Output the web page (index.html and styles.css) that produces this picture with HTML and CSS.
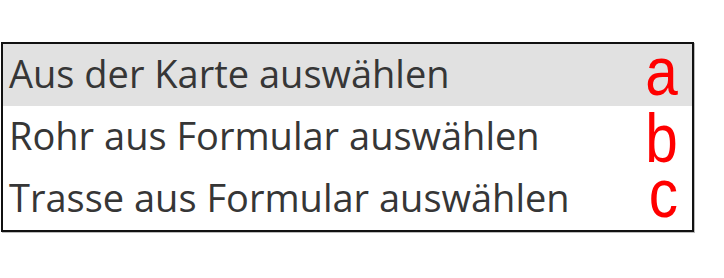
FILE: index.html
```html
<!DOCTYPE html>
<html lang="de">
<head>
<meta charset="utf-8">
<title>Auswahl</title>
<link rel="stylesheet" href="styles.css">
</head>
<body>
<div class="page">
  <ul class="menu">
    <li class="item item--active"><span class="label">Aus der Karte auswählen</span><span class="mark mark--a">a</span></li>
    <li class="item"><span class="label">Rohr aus Formular auswählen</span><span class="mark mark--b">b</span></li>
    <li class="item"><span class="label">Trasse aus Formular auswählen</span><span class="mark mark--c">c</span></li>
  </ul>
</div>
</body>
</html>
```
FILE: styles.css
```css
html, body {
  margin: 0;
  padding: 0;
  background: #ffffff;
}
.page {
  width: 724px;
  height: 278px;
  padding: 42px 0 0 1px;
  box-sizing: border-box;
}
.menu {
  list-style: none;
  margin: 0;
  padding: 0;
  width: 693px;
  box-sizing: border-box;
  border: 2px solid #111;
  box-shadow: 1px 1px 0 #bbb;
}
.item {
  height: 62px;
  display: flex;
  align-items: center;
  justify-content: space-between;
  padding: 0 14px 0 6px;
}
.item--active {
  background: #e1e1e1;
}
.label {
  font-family: "Open Sans", sans-serif;
  font-size: 38px;
  color: #363636;
  line-height: 50px;
  margin-top: -4px;
}
.mark {
  display: inline-block;
  font-family: "Liberation Sans", Arial, sans-serif;
  font-size: 68px;
  color: #ff0000;
  line-height: 46px;
  transform-origin: right center;
}
.mark--a { transform: translateY(-4px) scaleX(0.86); }
.mark--b { transform: translateY(1px) scaleX(0.86); }
.mark--c { transform: translateY(-6px) scaleX(0.86); }
```
